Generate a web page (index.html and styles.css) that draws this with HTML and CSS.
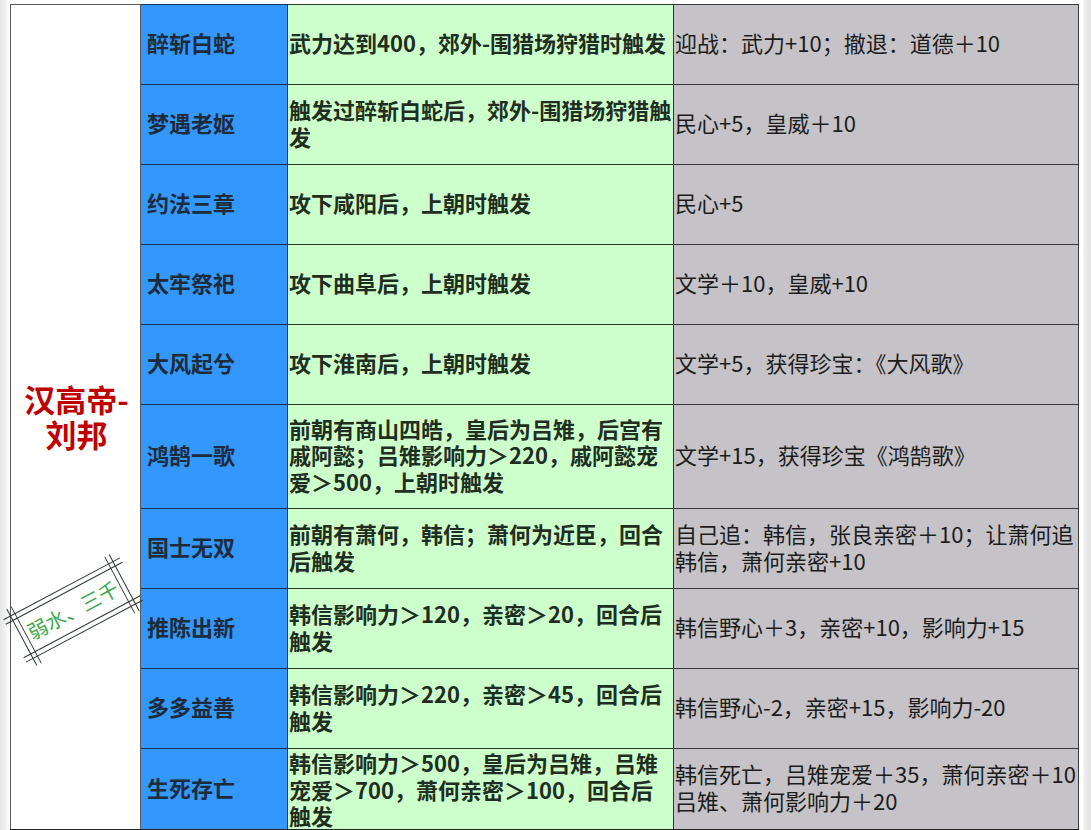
FILE: index.html
```html
<!DOCTYPE html>
<html lang="zh-CN">
<head>
<meta charset="utf-8">
<title>汉高帝-刘邦</title>
<link rel="stylesheet" href="styles.css">
</head>
<body>
<div class="page">
  <div class="wrap">
    <table class="events">
      <colgroup>
        <col class="c1"><col class="c2"><col class="c3"><col class="c4">
      </colgroup>
      <tbody>
        <tr>
          <td class="hero" rowspan="10">
            <div class="hero-line">汉高帝-</div>
            <div class="hero-line">刘邦</div>
          </td>
          <td class="name">醉斩白蛇</td>
          <td class="cond">武力达到400，郊外-围猎场狩猎时触发</td>
          <td class="res">迎战：武力+10；撤退：道德＋10</td>
        </tr>
        <tr>
          <td class="name">梦遇老妪</td>
          <td class="cond">触发过醉斩白蛇后，郊外-围猎场狩猎触发</td>
          <td class="res">民心+5，皇威＋10</td>
        </tr>
        <tr>
          <td class="name">约法三章</td>
          <td class="cond">攻下咸阳后，上朝时触发</td>
          <td class="res">民心+5</td>
        </tr>
        <tr>
          <td class="name">太牢祭祀</td>
          <td class="cond">攻下曲阜后，上朝时触发</td>
          <td class="res">文学＋10，皇威+10</td>
        </tr>
        <tr>
          <td class="name">大风起兮</td>
          <td class="cond">攻下淮南后，上朝时触发</td>
          <td class="res">文学+5，获得珍宝：《大风歌》</td>
        </tr>
        <tr class="tall">
          <td class="name">鸿鹄一歌</td>
          <td class="cond">前朝有商山四皓，皇后为吕雉，后宫有戚阿懿；吕雉影响力＞220，戚阿懿宠爱＞500，上朝时触发</td>
          <td class="res">文学+15，获得珍宝《鸿鹄歌》</td>
        </tr>
        <tr>
          <td class="name">国士无双</td>
          <td class="cond">前朝有萧何，韩信；萧何为近臣，回合后触发</td>
          <td class="res">自己追：韩信，张良亲密＋10；让萧何追韩信，萧何亲密+10</td>
        </tr>
        <tr>
          <td class="name">推陈出新</td>
          <td class="cond">韩信影响力＞120，亲密＞20，回合后触发</td>
          <td class="res">韩信野心＋3，亲密+10，影响力+15</td>
        </tr>
        <tr>
          <td class="name">多多益善</td>
          <td class="cond">韩信影响力＞220，亲密＞45，回合后触发</td>
          <td class="res">韩信野心-2，亲密+15，影响力-20</td>
        </tr>
        <tr>
          <td class="name">生死存亡</td>
          <td class="cond dense">韩信影响力＞500，皇后为吕雉，吕雉宠爱＞700，萧何亲密＞100，回合后触发</td>
          <td class="res">韩信死亡，吕雉宠爱＋35，萧何亲密＋10吕雉、萧何影响力＋20</td>
        </tr>
      </tbody>
    </table>
    <svg class="stamp" width="150" height="130" viewBox="0 0 150 130">
      <g transform="translate(75 65) rotate(-28)" stroke="#2f3a34" stroke-width="1" fill="none">
        <line x1="-66" y1="-24" x2="66" y2="-24"/>
        <line x1="-66" y1="-19" x2="66" y2="-19"/>
        <line x1="-66" y1="19" x2="66" y2="19"/>
        <line x1="-66" y1="24" x2="66" y2="24"/>
        <line x1="-58" y1="-32" x2="-58" y2="32"/>
        <line x1="-53" y1="-32" x2="-53" y2="32"/>
        <line x1="53" y1="-32" x2="53" y2="32"/>
        <line x1="58" y1="-32" x2="58" y2="32"/>
        <text x="0" y="8" text-anchor="middle" class="stamp-text">弱水、三千</text>
      </g>
    </svg>
  </div>
</div>
</body>
</html>
```
FILE: styles.css
```css
html, body {
  margin: 0;
  padding: 0;
}
body {
  background:
    linear-gradient(to right, #e6e6e6 0, #f3f3f3 6px, #ffffff 9px, #ffffff calc(100% - 8px), #ececec calc(100% - 7px), #e4e4e4 100%);
  font-family: "Noto Sans CJK SC", "Noto Sans", sans-serif;
  width: 1091px;
  height: 830px;
  overflow: hidden;
}
.page {
  padding: 4px 0 0 10px;
}
.wrap {
  position: relative;
  width: 1068px;
}
.events {
  border-collapse: collapse;
  table-layout: fixed;
  width: 1068px;
  border: 1px solid #5a5a5a;
  border-bottom: 2px solid #222;
}
.c1 { width: 130px; }
.c2 { width: 147px; }
.c3 { width: 386px; }
.c4 { width: 405px; }
.events tr {
  height: 80px;
}
.events tr.tall {
  height: 104px;
}
.events td {
  border: 1px solid #333;
  padding: 0 0 4px 0;
  vertical-align: middle;
  font-size: 22px;
  line-height: 26.5px;
}
.events td.hero {
  background: #ffffff;
  border-color: #5a5a5a;
  text-align: center;
  padding: 0 0 2px 2px;
}
.hero-line {
  color: #c00000;
  font-weight: 700;
  font-size: 31px;
  line-height: 35px;
}
.events td.name {
  background: #3397fb;
  color: #1d2b3b;
  font-weight: 700;
  padding-left: 6px;
  border-color: #1c2f5c;
}
.events td.cond {
  background: #ccffcc;
  color: #1f2e20;
  font-weight: 700;
  padding-left: 1px;
  border-color: #2b3a2b;
}
.events td.cond.dense {
  padding-bottom: 0;
}
.events td.res {
  background: #c5c3c7;
  color: #1c1c1c;
  font-weight: 400;
  padding-left: 1px;
  border-color: #3a3a3a;
}
.stamp {
  position: absolute;
  left: -12px;
  top: 541px;
}
.stamp-text {
  font-family: "Noto Sans CJK SC", sans-serif;
  font-size: 20px;
  fill: #3aa84c;
  stroke: none;
}
```
